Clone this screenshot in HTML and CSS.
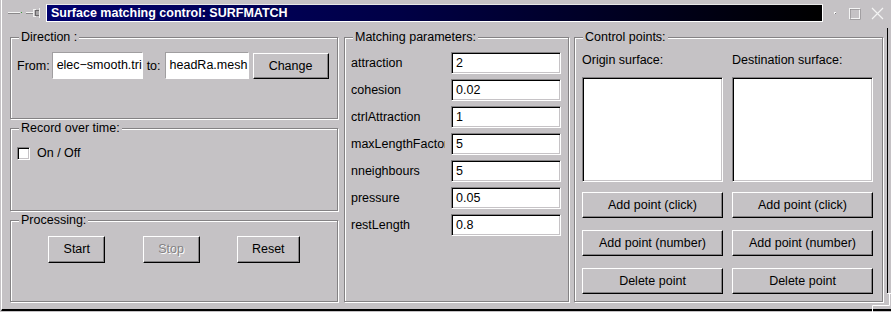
FILE: index.html
```html
<!DOCTYPE html>
<html lang="en">
<head>
  <meta charset="UTF-8" />
  <title>Surface matching control: SURFMATCH</title>
  <link rel="stylesheet" href="styles.css">
</head>
<body>
<div class="window">

  <div class="titlebar">
    <svg class="tb-left" width="44" height="24" viewBox="0 0 44 24">
      <line x1="6" y1="12.5" x2="18" y2="12.5" stroke="#f4f4f4" />
      <line x1="6" y1="13.5" x2="18" y2="13.5" stroke="#8a888a" />
      <rect x="19" y="12" width="1" height="1" fill="#3c9a3c" />
      <line x1="24" y1="12.5" x2="31" y2="12.5" stroke="#f4f4f4" />
      <line x1="24" y1="13.5" x2="31" y2="13.5" stroke="#8a888a" />
      <rect x="31.5" y="9.5" width="2" height="7" fill="none" stroke="#f0f0f0" />
      <rect x="33.5" y="10.5" width="4" height="5" fill="#a8a6a8" stroke="#6a686a" />
      <line x1="37.5" y1="8" x2="37.5" y2="18" stroke="#f0f0f0" />
    </svg>
    <div class="tb-title">Surface matching control: SURFMATCH</div>
    <svg class="tb-right" width="62" height="24" viewBox="0 0 62 24">
      <rect x="6" y="12" width="2" height="2" fill="#fafafa" />
      <rect x="7" y="13" width="1" height="1" fill="#7a787a" />
      <rect x="21.5" y="8.5" width="10" height="10" fill="none" stroke="#f4f4f4" />
      <rect x="22.5" y="9.5" width="10" height="10" fill="none" stroke="#8a888a" stroke-width="0.6" />
      <path d="M44 8 L55 19 M55 8 L44 19" stroke="#f4f4f4" stroke-width="1.2" />
    </svg>
  </div>

  <div class="main">
    <div class="col-left">
      <div class="group">
        <span class="group-title">Direction :</span>
        <div class="dir-row">
          <span class="dir-from">From:</span>
          <span class="dir-field dir-field-from">elec&minus;smooth.tri</span>
          <span class="dir-to">to:</span>
          <span class="dir-field dir-field-to">headRa.mesh</span>
          <button class="btn btn-change">Change</button>
        </div>
      </div>

      <div class="group">
        <span class="group-title">Record over time:</span>
        <label class="check-row">
          <span class="checkbox"></span>
          <span class="check-label">On / Off</span>
        </label>
      </div>

      <div class="group">
        <span class="group-title">Processing:</span>
        <div class="proc-row">
          <button class="btn btn-start">Start</button>
          <button class="btn btn-stop" disabled>Stop</button>
          <button class="btn btn-reset">Reset</button>
        </div>
      </div>
    </div>

    <div class="group col-params">
      <span class="group-title">Matching parameters:</span>
      <div class="param-list">
        <div class="param-row"><span class="param-name">attraction</span><span class="param-field">2</span></div>
        <div class="param-row"><span class="param-name">cohesion</span><span class="param-field">0.02</span></div>
        <div class="param-row"><span class="param-name">ctrlAttraction</span><span class="param-field">1</span></div>
        <div class="param-row"><span class="param-name">maxLengthFactor</span><span class="param-field">5</span></div>
        <div class="param-row"><span class="param-name">nneighbours</span><span class="param-field">5</span></div>
        <div class="param-row"><span class="param-name">pressure</span><span class="param-field">0.05</span></div>
        <div class="param-row"><span class="param-name">restLength</span><span class="param-field">0.8</span></div>
      </div>
    </div>

    <div class="group col-points">
      <span class="group-title">Control points:</span>
      <div class="cp-cols">
        <div class="cp-col">
          <div class="cp-label">Origin surface:</div>
          <div class="listbox"></div>
          <button class="btn cp-btn">Add point (click)</button>
          <button class="btn cp-btn">Add point (number)</button>
          <button class="btn cp-btn">Delete point</button>
        </div>
        <div class="cp-col">
          <div class="cp-label">Destination surface:</div>
          <div class="listbox"></div>
          <button class="btn cp-btn">Add point (click)</button>
          <button class="btn cp-btn">Add point (number)</button>
          <button class="btn cp-btn">Delete point</button>
        </div>
      </div>
    </div>
  </div>

  <!-- bits of the resize grip on the right edge -->
  <svg class="edge" width="20" height="312" viewBox="0 0 20 312">
    <line x1="16.5" y1="28" x2="16.5" y2="293" stroke="#000" />
    <path d="M16.5 293.5 H20 M18.5 293 V305.5 H1.5 V312" fill="none" stroke="#fff" />
  </svg>
</div>
</body>
</html>
```

FILE: styles.css
```css
/* window */
body {
  margin: 0;
  width: 891px;
  height: 312px;
  overflow: hidden;
  background: #c5c2c5;
  font-family: 'Liberation Sans', Arial, sans-serif;
  font-size: 12.5px;
  color: #000;
}

.window {
  position: relative;
  margin-left: 1px;
  height: 309px;
  border-left: 1px solid #fff;
  border-bottom: 2px solid #000;
}

/* title bar */
.titlebar {
  display: flex;
  align-items: flex-start;
  height: 30px;
}

.tb-left {
  flex: 0 0 44px;
}

.tb-title {
  flex: 0 0 777px;
  box-sizing: border-box;
  height: 18px;
  margin-top: 4px;
  border: 1px solid #fff;
  border-top-color: #e8e8e8;
  background: linear-gradient(90deg, #00006e 0%, #000046 45%, #000000 100%);
  color: #fff;
  font-weight: bold;
  font-size: 12.5px;
  line-height: 16px;
  padding-left: 4px;
  white-space: nowrap;
}

.tb-right {
  position: absolute;
  left: 826px;
  top: 0;
}

/* columns */
.main {
  display: flex;
  height: 279px;
  box-sizing: border-box;
  padding: 7px 0 7px 8px;
}

.main > * {
  flex-shrink: 0;
}

.col-left {
  width: 328px;
  display: flex;
  flex-direction: column;
  gap: 9px;
}

.col-left .group {
  flex: 1;
}

.col-params {
  width: 225px;
  margin-left: 6px;
}

.col-points {
  width: 309px;
  margin-left: 5px;
}

/* etched group box */
.group {
  position: relative;
  box-sizing: border-box;
  border: 1px solid #848284;
  box-shadow: inset 1px 1px 0 #fff, 1px 1px 0 #fff;
}

.group-title {
  position: absolute;
  top: -9px;
  left: 8px;
  padding: 0 2px;
  line-height: 16px;
  background: #c5c2c5;
  white-space: nowrap;
}

/* buttons */
.btn {
  box-sizing: border-box;
  font-family: inherit;
  font-size: 12.5px;
  color: #000;
  background: #c5c2c5;
  border: 1px solid;
  border-color: #fff #000 #000 #fff;
  box-shadow: inset -1px -1px 0 #848284;
  padding: 0;
  margin: 0;
  height: 27px;
}

.btn:disabled {
  color: #848284;
  text-shadow: 1px 1px 0 #fff;
}

/* Direction */
.dir-row {
  display: flex;
  align-items: center;
  padding: 14px 0 0 6px;
}

.dir-from {
  margin-right: 2px;
}

.dir-to {
  margin: 0 4px;
}

.dir-field {
  box-sizing: border-box;
  height: 27px;
  line-height: 25px;
  padding-left: 4px;
  background: #fff;
  border: 1px solid;
  border-color: #a09ea0 #fff #fff #a09ea0;
  white-space: nowrap;
  overflow: hidden;
}

.dir-field-from {
  width: 91px;
}

.dir-field-to {
  width: 84px;
}

.btn-change {
  width: 76px;
  height: 26px;
  margin-left: 4px;
}

/* Record */
.check-row {
  display: flex;
  align-items: center;
  padding: 18px 0 0 6px;
}

.checkbox {
  box-sizing: border-box;
  width: 13px;
  height: 13px;
  background: #fff;
  border: 1px solid;
  border-color: #848284 #fff #fff #848284;
  box-shadow: inset 1px 1px 0 #000, inset -1px -1px 0 #c6c3c6;
}

.check-label {
  margin-left: 7px;
  line-height: 13px;
}

/* Processing */
.proc-row {
  display: flex;
  justify-content: space-evenly;
  padding-top: 15px;
}

.btn-start,
.btn-stop {
  width: 57px;
}

.btn-reset {
  width: 63px;
}

/* Matching parameters */
.param-list {
  display: flex;
  flex-direction: column;
  gap: 5px;
  padding: 14px 0 0 6px;
}

.param-row {
  display: flex;
  align-items: center;
  height: 22px;
}

.param-name {
  width: 94px;
  overflow: hidden;
  white-space: nowrap;
}

.param-field,
.listbox {
  box-sizing: border-box;
  background: #fff;
  border: 1px solid;
  border-color: #848284 #fff #fff #848284;
  box-shadow: inset 1px 1px 0 #000, inset -1px -1px 0 #c6c3c6;
}

.param-field {
  width: 110px;
  height: 22px;
  margin-left: 6px;
  padding-left: 4px;
  line-height: 21px;
}

/* Control points */
.cp-cols {
  display: grid;
  grid-template-columns: 141px 141px;
  column-gap: 9px;
  padding: 14px 0 0 7px;
}

.cp-col {
  display: flex;
  flex-direction: column;
}

.cp-label {
  line-height: 16px;
  white-space: nowrap;
}

.listbox {
  height: 105px;
  margin-top: 9px;
}

.cp-btn {
  height: 26px;
  margin-top: 12px;
}

.cp-btn:first-of-type {
  margin-top: 10px;
}

.edge {
  position: absolute;
  right: 0;
  top: 0;
}
```
